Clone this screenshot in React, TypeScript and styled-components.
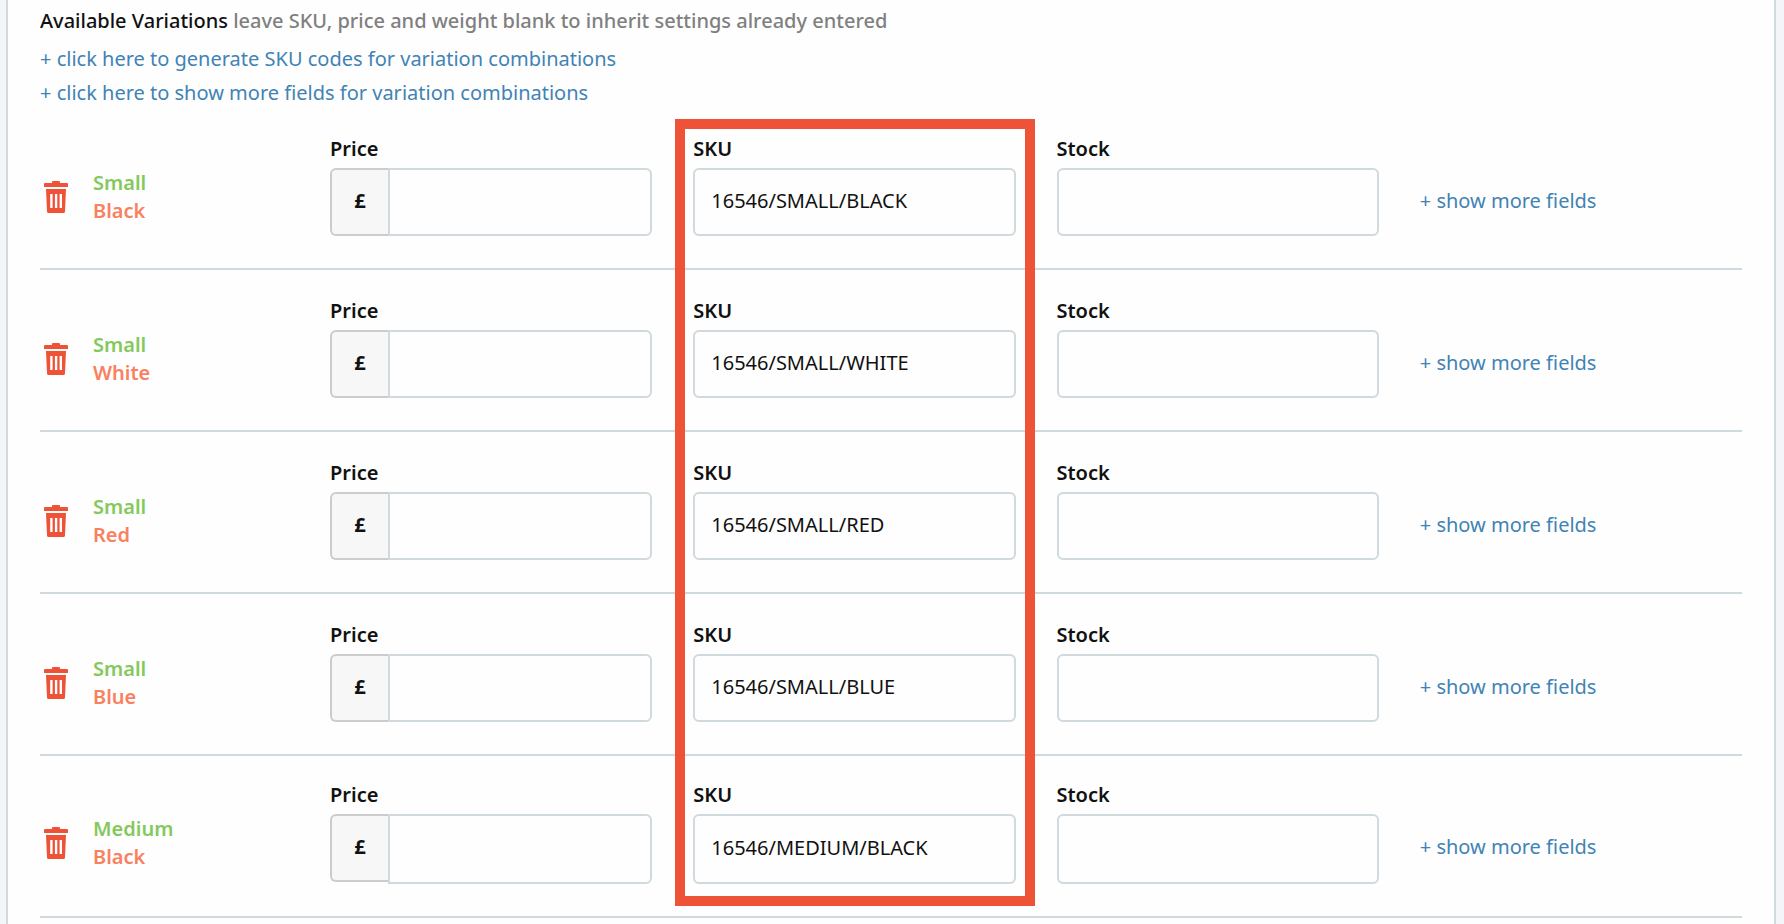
import React, { useId, useState } from "react";
import styled, { createGlobalStyle, css } from "styled-components";

const color = {
  page: "#f3f5f8",
  panel: "#fefefe",
  line: "#cfd9de",
  text: "#111111",
  muted: "#808080",
  link: "#4183b4",
  size: "#84c95c",
  shade: "#f98060",
  accent: "#ee5237",
  addonLine: "#cccccc",
  addon: "#f7f7f7",
};

const GlobalStyle = createGlobalStyle`
  *, *::before, *::after { box-sizing: border-box; }
  body {
    margin: 0;
    background: ${color.page};
    color: ${color.text};
    font-family: "Noto Sans", "Open Sans", sans-serif;
    font-size: 20px;
    line-height: 28px;
  }
`;

const rowColumns = css`
  display: grid;
  grid-template-columns: 290px minmax(0, 1fr);
`;

const fieldColumns = css`
  display: grid;
  grid-template-columns: repeat(4, minmax(0, 1fr));
  column-gap: 41px;
`;

const Panel = styled.main`
  min-height: 100vh;
  margin: 0 8px 0 6px;
  padding: 7px 32px 0;
  background: ${color.panel};
  border: solid ${color.line};
  border-width: 0 2px;
`;

const Heading = styled.h2`
  margin: 0 0 7px;
  font-size: inherit;
  font-weight: 500;
`;

const Hint = styled.span`
  color: ${color.muted};
`;

const TextLink = styled.a`
  color: ${color.link};
  text-decoration: none;

  &:hover {
    text-decoration: underline;
  }
`;

const Actions = styled.nav`
  display: flex;
  flex-direction: column;
  align-items: flex-start;
  margin-bottom: -2px;
  line-height: 34px;
`;

const VariationArea = styled.section`
  position: relative;
`;

const VariationList = styled.ul`
  margin: 0;
  padding: 0;
  list-style: none;
`;

const Row = styled.li<{ $tall?: boolean }>`
  ${rowColumns}
  align-items: start;
  padding: ${(p) => (p.$tall ? 25 : 27)}px 0 32px;
  border-bottom: 2px solid ${color.line};
`;

const Identity = styled.div`
  display: flex;
  gap: 25px;
  padding: 34px 0 0 4px;
`;

const DeleteButton = styled.button`
  display: block;
  height: 32px;
  margin-top: 12px;
  padding: 0;
  border: 0;
  background: none;
  color: ${color.accent};
  cursor: pointer;

  svg {
    display: block;
  }
`;

const Options = styled.div`
  display: flex;
  flex-direction: column;
  font-weight: 600;
`;

const Option = styled.span<{ $kind: "size" | "shade" }>`
  color: ${(p) => color[p.$kind]};
`;

const Fields = styled.div`
  ${fieldColumns}
  align-items: start;
`;

const Field = styled.div`
  display: flex;
  flex-direction: column;
  gap: 5px;
`;

const Label = styled.label`
  font-weight: 600;
`;

const Group = styled.div`
  display: flex;
  align-items: flex-start;
`;

const Addon = styled.span`
  display: flex;
  flex: none;
  align-items: center;
  justify-content: center;
  width: 58px;
  height: 68px;
  padding: 0 0 2px;
  background: ${color.addon};
  border: 2px solid ${color.addonLine};
  border-right: 0;
  border-radius: 6px 0 0 6px;
  font-weight: 700;
`;

const Input = styled.input<{ $tall?: boolean; $joined?: boolean }>`
  flex: 1;
  width: 100%;
  min-width: 0;
  min-height: ${(p) => (p.$tall ? 70 : 68)}px;
  padding: 0 16px 2px;
  background: ${color.panel};
  border: 2px solid ${color.line};
  border-radius: ${(p) => (p.$joined ? "0 6px 6px 0" : "6px")};
  color: ${color.text};
  font: inherit;
`;

const More = styled.div`
  padding-top: 52px;
`;

const HighlightLayer = styled.div`
  ${rowColumns}
  position: absolute;
  inset: 11px 0 12px;
  pointer-events: none;
`;

const HighlightTrack = styled.div`
  ${fieldColumns}
  grid-column: 2;
`;

const Highlight = styled.div`
  grid-column: 2;
  margin: 0 -19px 0 -18px;
  border: 10px solid ${color.accent};
`;

function TrashIcon() {
  return (
    <svg width="24" height="32" viewBox="0 0 24 32" fill="currentColor" aria-hidden="true">
      <path d="M8 2 V1 Q8 0 9 0 H15 Q16 0 16 1 V2 H23 Q24 2 24 3 V6 H0 V3 Q0 2 1 2 Z" />
      <path
        fillRule="evenodd"
        d="M2 8 H22 L21 30.4 Q20.9 32 19.4 32 H4.6 Q3.1 32 3 30.4 Z M6.2 13 V27 H8.6 V13 Z M10.9 13 V27 H13.3 V13 Z M15.6 13 V27 H18 V13 Z"
      />
    </svg>
  );
}

type Variation = { size: string; shade: string; sku: string; tall?: boolean };

const variations: Variation[] = [
  { size: "Small", shade: "Black", sku: "16546/SMALL/BLACK" },
  { size: "Small", shade: "White", sku: "16546/SMALL/WHITE" },
  { size: "Small", shade: "Red", sku: "16546/SMALL/RED" },
  { size: "Small", shade: "Blue", sku: "16546/SMALL/BLUE" },
  { size: "Medium", shade: "Black", sku: "16546/MEDIUM/BLACK", tall: true },
];

function VariationRow({ size, shade, sku, tall }: Variation) {
  const id = useId();
  const [values, setValues] = useState({ price: "", sku, stock: "" });
  const bind = (name: keyof typeof values) => ({
    id: `${id}-${name}`,
    value: values[name],
    onChange: (e: React.ChangeEvent<HTMLInputElement>) =>
      setValues({ ...values, [name]: e.target.value }),
  });

  return (
    <Row $tall={tall}>
      <Identity>
        <DeleteButton type="button" aria-label={`Delete ${size} ${shade}`}>
          <TrashIcon />
        </DeleteButton>
        <Options>
          <Option $kind="size">{size}</Option>
          <Option $kind="shade">{shade}</Option>
        </Options>
      </Identity>
      <Fields>
        <Field>
          <Label htmlFor={`${id}-price`}>Price</Label>
          <Group>
            <Addon>£</Addon>
            <Input type="text" $joined $tall={tall} {...bind("price")} />
          </Group>
        </Field>
        <Field>
          <Label htmlFor={`${id}-sku`}>SKU</Label>
          <Input type="text" $tall={tall} {...bind("sku")} />
        </Field>
        <Field>
          <Label htmlFor={`${id}-stock`}>Stock</Label>
          <Input type="text" $tall={tall} {...bind("stock")} />
        </Field>
        <More>
          <TextLink href="#more">+ show more fields</TextLink>
        </More>
      </Fields>
    </Row>
  );
}

export default function App() {
  return (
    <>
      <GlobalStyle />
      <Panel>
        <Heading>
          Available Variations{" "}
          <Hint>leave SKU, price and weight blank to inherit settings already entered</Hint>
        </Heading>
        <Actions>
          <TextLink href="#generate">
            + click here to generate SKU codes for variation combinations
          </TextLink>
          <TextLink href="#fields">
            + click here to show more fields for variation combinations
          </TextLink>
        </Actions>
        <VariationArea>
          <VariationList>
            {variations.map((v) => (
              <VariationRow key={v.sku} {...v} />
            ))}
          </VariationList>
          <HighlightLayer>
            <HighlightTrack>
              <Highlight />
            </HighlightTrack>
          </HighlightLayer>
        </VariationArea>
      </Panel>
    </>
  );
}
